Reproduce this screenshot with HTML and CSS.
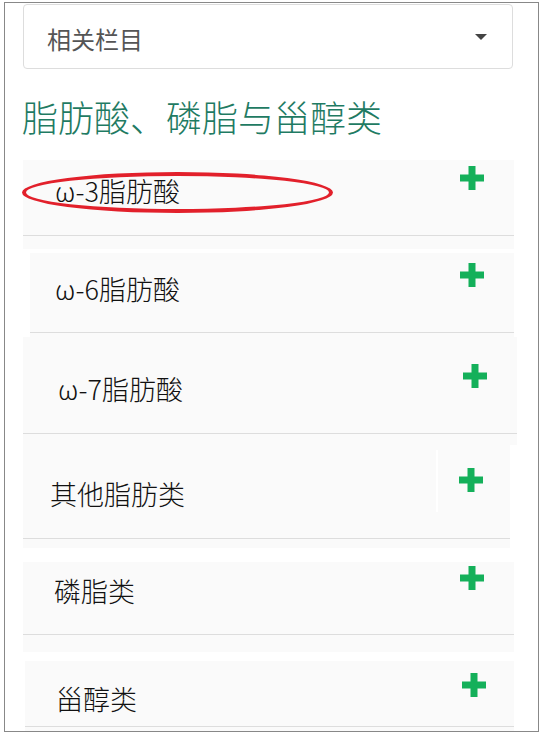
FILE: index.html
```html
<!DOCTYPE html>
<html lang="zh-CN">

<head>
  <meta charset="UTF-8">
  <meta name="viewport" content="width=device-width, initial-scale=1.0">
  <title>脂肪酸、磷脂与甾醇类</title>
  <link rel="stylesheet" href="styles.css">
</head>

<body>
  <div class="frame">
    <div class="column-select">
      <span class="column-select-text">相关栏目</span>
      <span class="caret"></span>
    </div>

    <h2 class="section-title">脂肪酸、磷脂与甾醇类</h2>

    <div class="item item-1">
      <div class="item-head">
        <span class="item-title">ω-3脂肪酸</span>
        <svg class="item-plus" viewBox="0 0 24 24"><rect x="0" y="8.5" width="24" height="7"/><rect x="8.5" y="0" width="7" height="24"/></svg>
      </div>
      <div class="item-foot"></div>
      <div class="mark"></div>
    </div>

    <div class="item item-2">
      <div class="item-head">
        <span class="item-title">ω-6脂肪酸</span>
        <svg class="item-plus" viewBox="0 0 24 24"><rect x="0" y="8.5" width="24" height="7"/><rect x="8.5" y="0" width="7" height="24"/></svg>
      </div>
      <div class="item-foot"></div>
    </div>

    <div class="item item-3">
      <div class="item-head">
        <span class="item-title">ω-7脂肪酸</span>
        <svg class="item-plus" viewBox="0 0 24 24"><rect x="0" y="8.5" width="24" height="7"/><rect x="8.5" y="0" width="7" height="24"/></svg>
      </div>
      <div class="item-foot"></div>
    </div>

    <div class="item item-4">
      <div class="item-head">
        <span class="item-title">其他脂肪类</span>
        <svg class="item-plus" viewBox="0 0 24 24"><rect x="0" y="8.5" width="24" height="7"/><rect x="8.5" y="0" width="7" height="24"/></svg>
      </div>
      <div class="item-foot"></div>
      <div class="seam"></div>
    </div>

    <div class="item item-5">
      <div class="item-head">
        <span class="item-title">磷脂类</span>
        <svg class="item-plus" viewBox="0 0 24 24"><rect x="0" y="8.5" width="24" height="7"/><rect x="8.5" y="0" width="7" height="24"/></svg>
      </div>
      <div class="item-foot"></div>
    </div>

    <div class="item item-6">
      <div class="item-head">
        <span class="item-title">甾醇类</span>
        <svg class="item-plus" viewBox="0 0 24 24"><rect x="0" y="8.5" width="24" height="7"/><rect x="8.5" y="0" width="7" height="24"/></svg>
      </div>
      <div class="item-foot"></div>
    </div>
  </div>
</body>

</html>
```

FILE: styles.css
```css
* {
  box-sizing: border-box;
  margin: 0;
  padding: 0;
}

body {
  background: white;
  font-family: "Noto Sans CJK SC", sans-serif;
}

.frame {
  margin: 2px 0 0 4px;
  width: 535px;
  height: 730px;
  border: 1px solid #888;
  overflow: hidden;
}

/* dropdown */
.column-select {
  margin: 1px 0 0 18px;
  width: 490px;
  height: 65px;
  border: 1px solid #ddd;
  border-radius: 4px;
  display: flex;
  justify-content: space-between;
  align-items: center;
  padding: 0 25px 0 23px;
}

.column-select-text {
  font-size: 24px;
  line-height: 30px;
  color: #555;
  margin-top: 4px;
}

.caret {
  width: 0;
  height: 0;
  border-left: 6px solid transparent;
  border-right: 6px solid transparent;
  border-top: 6px solid #444;
}

.section-title {
  margin: 25px 0 22px 17px;
  font-size: 36px;
  line-height: 44px;
  font-weight: 300;
  color: #1f7b63;
}

/* list items */
.item {
  position: relative;
  background: #fafafa;
}

.item-head {
  display: flex;
  justify-content: space-between;
  align-items: flex-start;
  border-bottom: 1px solid #ddd;
}

.item-title {
  font-size: 27px;
  line-height: 30px;
  font-weight: 300;
  color: #111;
}

.item-plus {
  width: 24px;
  height: 24px;
  fill: #14b05a;
  flex-shrink: 0;
}

.item-1 { margin-left: 18px; width: 491px; }
.item-1 .item-head { height: 76px; padding: 0 30px 0 32px; }
.item-1 .item-title { margin-top: 16px; }
.item-1 .item-plus { margin-top: 6px; }
.item-1 .item-foot { height: 13px; }

.item-2 { margin: 4px 0 0 25px; width: 484px; }
.item-2 .item-head { height: 80px; padding: 0 30px 0 25px; }
.item-2 .item-title { margin-top: 21px; }
.item-2 .item-plus { margin-top: 10px; }
.item-2 .item-foot { height: 4px; }

.item-3 { margin-left: 18px; width: 494px; }
.item-3 .item-head { height: 97px; padding: 0 30px 0 35px; }
.item-3 .item-title { margin-top: 37px; }
.item-3 .item-plus { margin-top: 27px; }
.item-3 .item-foot { height: 11px; }

.item-4 { margin-left: 18px; width: 487px; }
.item-4 .item-head { height: 94px; padding: 0 27px 0 27px; }
.item-4 .item-title { margin-top: 34px; }
.item-4 .item-plus { margin-top: 23px; }
.item-4 .item-foot { height: 9px; }

.item-5 { margin: 14px 0 0 18px; width: 491px; }
.item-5 .item-head { height: 73px; padding: 0 30px 0 31px; }
.item-5 .item-title { margin-top: 14px; }
.item-5 .item-plus { margin-top: 4px; }
.item-5 .item-foot { height: 17px; }

.item-6 { margin: 9px 0 0 20px; width: 489px; }
.item-6 .item-head { height: 66px; padding: 0 28px 0 31px; }
.item-6 .item-title { margin-top: 23px; }
.item-6 .item-plus { margin-top: 12px; }
.item-6 .item-foot { height: 10px; }

/* red hand-drawn mark round the first title */
.mark {
  position: absolute;
  left: -1px;
  top: 12px;
  width: 311px;
  height: 41px;
  border: 4px solid #e2202b;
  border-radius: 50%;
}

.seam {
  position: absolute;
  left: 413px;
  top: 5px;
  width: 2px;
  height: 62px;
  background: white;
}
```
